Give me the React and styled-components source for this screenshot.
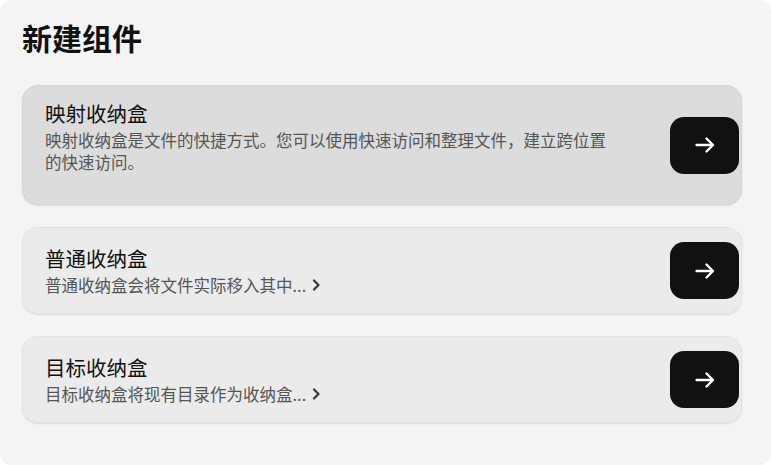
import styled, { createGlobalStyle } from 'styled-components';

const GlobalStyle = createGlobalStyle`
  html, body {
    margin: 0;
    padding: 0;
    background: #ffffff;
  }
  body {
    font-family: "Noto Sans CJK SC", "Noto Sans", sans-serif;
  }
`;

const Panel = styled.div`
  box-sizing: border-box;
  height: 465px;
  background: #f4f4f4;
  border-radius: 12px;
  padding: 17px 29px 0 22px;
`;

const Heading = styled.h1`
  margin: 0 0 28px;
  font-size: 30px;
  line-height: 40px;
  font-weight: 700;
  color: #111;
`;

const List = styled.div`
  display: flex;
  flex-direction: column;
  gap: 22px;
`;

const Card = styled.div`
  box-sizing: border-box;
  display: flex;
  align-items: center;
  justify-content: space-between;
  min-height: ${props => (props.expanded ? '120px' : '87px')};
  padding: 0 2px 0 22px;
  border-radius: 16px;
  background: ${props => (props.expanded ? '#dcdcdc' : '#ebebeb')};
  border: 1px solid rgba(0, 0, 0, 0.03);
  box-shadow: 0 1px 2px rgba(0, 0, 0, 0.1);
`;

const Text = styled.div`
  align-self: ${props => (props.expanded ? 'flex-start' : 'center')};
  padding-top: ${props => (props.expanded ? '14px' : '0')};
  display: flex;
  flex-direction: column;
  gap: 3px;
`;

const CardTitle = styled.div`
  font-size: 20.5px;
  line-height: 26px;
  color: #111;
`;

const Desc = styled.div`
  max-width: 568px;
  font-size: 16.5px;
  line-height: 22px;
  color: #555;
  display: flex;
  align-items: center;
  flex-wrap: wrap;

  svg {
    margin-left: 5px;
  }
`;

const GoButton = styled.button`
  flex: none;
  width: 69px;
  height: 57px;
  border: none;
  border-radius: 14px;
  background: #111;
  color: #fff;
  display: flex;
  align-items: center;
  justify-content: center;
  cursor: pointer;
`;

const Arrow = () => (
  <svg width="20" height="16" viewBox="0 0 20 16" fill="none" stroke="currentColor"
    strokeWidth="2.3" strokeLinecap="round" strokeLinejoin="round">
    <path d="M1.5 8h16.5M11.5 1.5 18 8l-6.5 6.5" />
  </svg>
);

const Chevron = () => (
  <svg width="10" height="14" viewBox="0 0 10 14" fill="none" stroke="#3a3a3a"
    strokeWidth="2.3" strokeLinecap="round" strokeLinejoin="round">
    <path d="M3 2.5 7.5 7 3 11.5" />
  </svg>
);

const boxes = [
  {
    title: '映射收纳盒',
    desc: '映射收纳盒是文件的快捷方式。您可以使用快速访问和整理文件，建立跨位置的快速访问。',
    expanded: true,
  },
  { title: '普通收纳盒', desc: '普通收纳盒会将文件实际移入其中...' },
  { title: '目标收纳盒', desc: '目标收纳盒将现有目录作为收纳盒...' },
];

export default function App() {
  return (
    <>
      <GlobalStyle />
      <Panel>
        <Heading>新建组件</Heading>
        <List>
          {boxes.map(box => (
            <Card key={box.title} expanded={box.expanded}>
              <Text expanded={box.expanded}>
                <CardTitle>{box.title}</CardTitle>
                <Desc>
                  {box.expanded ? box.desc : (
                    <>
                      {box.desc}
                      <Chevron />
                    </>
                  )}
                </Desc>
              </Text>
              <GoButton>
                <Arrow />
              </GoButton>
            </Card>
          ))}
        </List>
      </Panel>
    </>
  );
}
